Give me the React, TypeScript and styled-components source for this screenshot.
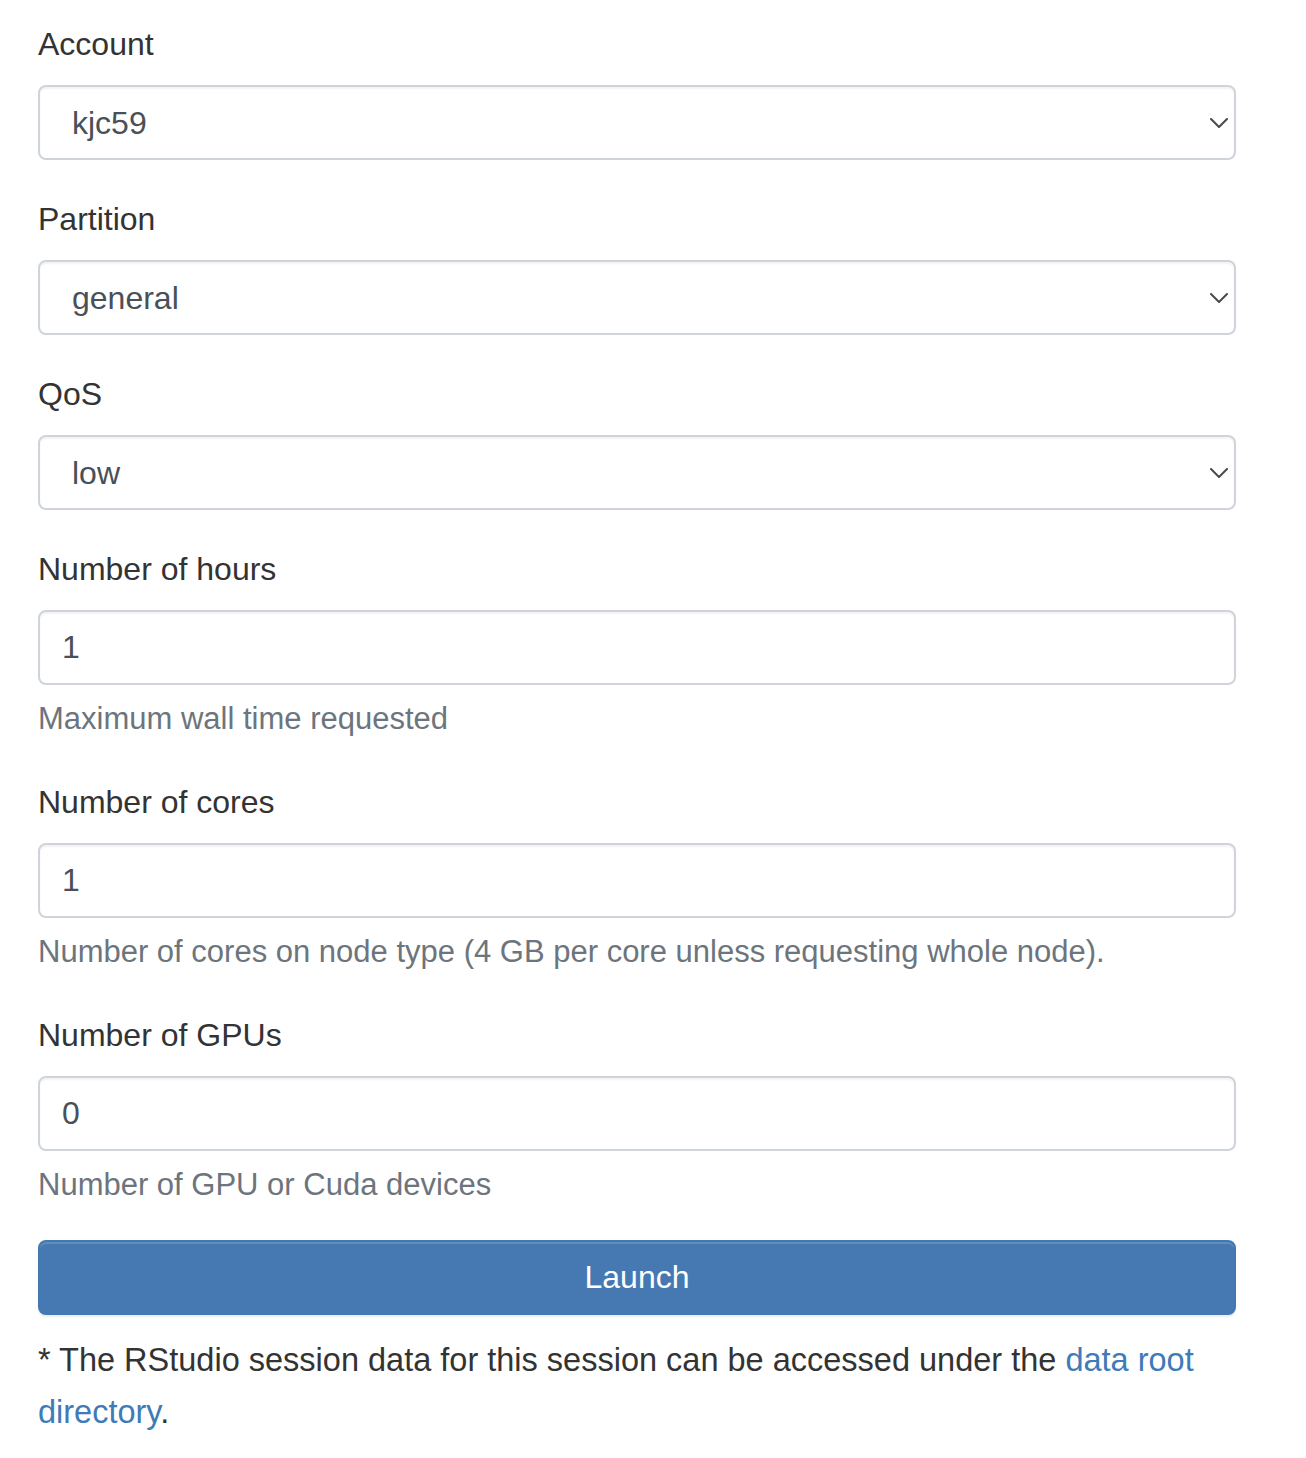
import React from "react";
import styled, { createGlobalStyle } from "styled-components";

const GlobalStyle = createGlobalStyle`
  html, body { margin: 0; padding: 0; background: #fff; }
  body { font-family: "Helvetica Neue", Helvetica, "Liberation Sans", Arial, sans-serif; }
  * { box-sizing: border-box; }
`;

const Page = styled.div`
  padding: 20px 0 40px 38px;
  width: 1236px;
`;

const Group = styled.div<{ $mb?: number }>`
  margin-bottom: ${(p) => (p.$mb ?? 35)}px;
`;

const Label = styled.label`
  display: block;
  font-size: 32px;
  line-height: 48px;
  color: #333;
  margin-bottom: 17px;
`;

const SelectWrap = styled.div`
  position: relative;
`;

const Select = styled.select`
  display: block;
  width: 100%;
  height: 75px;
  appearance: none;
  -webkit-appearance: none;
  background: #fff;
  border: 2px solid #ced4da;
  border-radius: 8px;
  padding: 0 60px 0 32px;
  font-family: inherit;
  font-size: 32px;
  color: #495057;
  box-shadow: inset 0 2px 2px rgba(0, 0, 0, 0.05);
  outline: none;
`;

const Chevron = styled.svg`
  position: absolute;
  right: 8px;
  top: 50%;
  width: 18px;
  height: 10px;
  margin-top: -5px;
  pointer-events: none;
`;

const Input = styled.input`
  display: block;
  width: 100%;
  height: 75px;
  background: #fff;
  border: 2px solid #ced4da;
  border-radius: 8px;
  padding: 0 22px;
  font-family: inherit;
  font-size: 32px;
  color: #495057;
  box-shadow: inset 0 2px 2px rgba(0, 0, 0, 0.05);
  outline: none;
`;

const Help = styled.small`
  display: block;
  margin-top: 10px;
  font-size: 31px;
  line-height: 48px;
  color: #6c757d;
`;

const Button = styled.button`
  display: block;
  width: 100%;
  height: 75px;
  border: 2px solid #4577b0;
  border-radius: 8px;
  background: #4679b2;
  color: #fff;
  font-family: inherit;
  font-size: 32px;
  box-shadow: inset 0 2px 0 rgba(255, 255, 255, 0.15), 0 2px 2px rgba(0, 0, 0, 0.08);
  cursor: pointer;
`;

const Note = styled.p`
  margin: 19px 0 0;
  font-size: 32.5px;
  line-height: 52px;
  color: #333;
`;

const Link = styled.a`
  color: #3f7ab9;
  text-decoration: none;
`;

type SelectFieldProps = { label: string; value: string };

const SelectField = ({ label, value }: SelectFieldProps) => (
  <Group>
    <Label>{label}</Label>
    <SelectWrap>
      <Select defaultValue={value}>
        <option value={value}>{value}</option>
      </Select>
      <Chevron viewBox="0 0 18 10" fill="none">
        <path d="M1 1 L9 9 L17 1" stroke="#4a4a4a" strokeWidth="2" strokeLinecap="round" strokeLinejoin="round" />
      </Chevron>
    </SelectWrap>
  </Group>
);

type InputFieldProps = { label: string; value: string; help: string; mb?: number };

const InputField = ({ label, value, help, mb }: InputFieldProps) => (
  <Group $mb={mb}>
    <Label>{label}</Label>
    <Input type="text" defaultValue={value} />
    <Help>{help}</Help>
  </Group>
);

export default function App() {
  return (
    <>
      <GlobalStyle />
      <Page>
        <SelectField label="Account" value="kjc59" />
        <SelectField label="Partition" value="general" />
        <SelectField label="QoS" value="low" />
        <InputField label="Number of hours" value="1" help="Maximum wall time requested" />
        <InputField
          label="Number of cores"
          value="1"
          help="Number of cores on node type (4 GB per core unless requesting whole node)."
        />
        <InputField label="Number of GPUs" value="0" help="Number of GPU or Cuda devices" mb={31} />
        <Button type="button">Launch</Button>
        <Note>
          * The RStudio session data for this session can be accessed under the{" "}
          <Link href="#">data root directory</Link>.
        </Note>
      </Page>
    </>
  );
}
